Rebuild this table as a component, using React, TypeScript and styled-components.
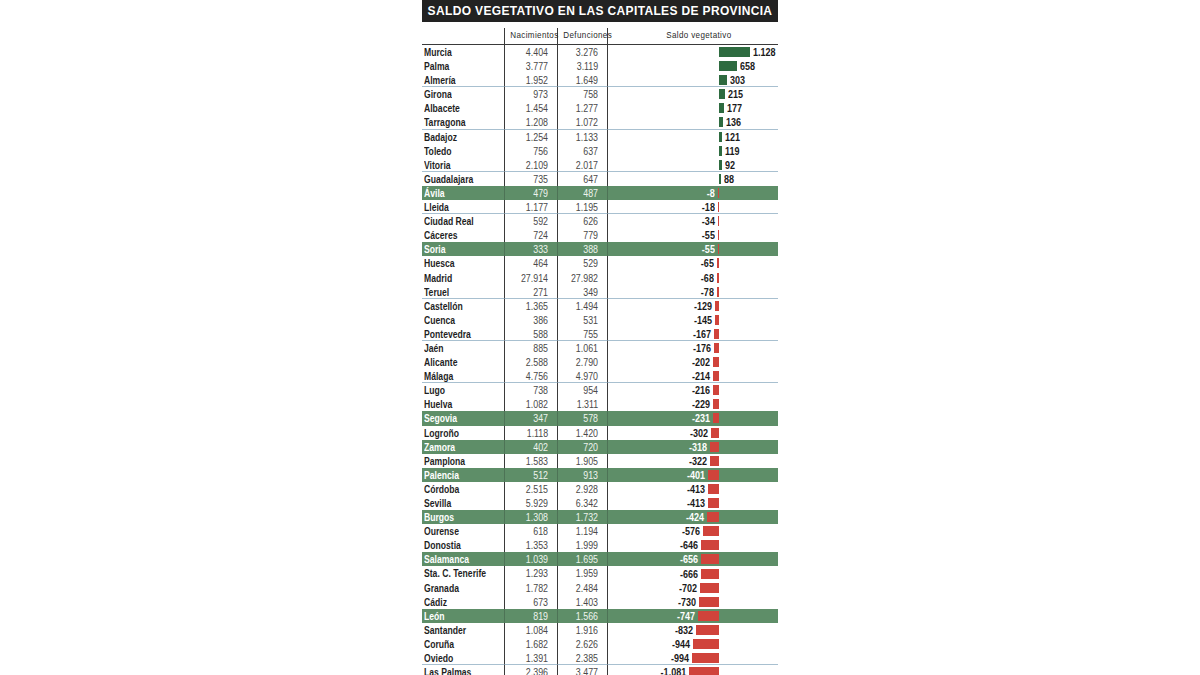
import React from 'react';
import styled, { createGlobalStyle } from 'styled-components';

const GlobalStyle = createGlobalStyle`
    html, body {
        margin: 0;
        padding: 0;
        background: #ffffff;
    }
    body {
        font-family: "Liberation Sans", Arial, sans-serif;
    }
`;

type Row = [string, string, string, number, boolean?];

// nombre, nacimientos, defunciones, saldo, destacada
const ROWS: Row[] = [
    ['Murcia', '4.404', '3.276', 1128],
    ['Palma', '3.777', '3.119', 658],
    ['Almería', '1.952', '1.649', 303],
    ['Girona', '973', '758', 215],
    ['Albacete', '1.454', '1.277', 177],
    ['Tarragona', '1.208', '1.072', 136],
    ['Badajoz', '1.254', '1.133', 121],
    ['Toledo', '756', '637', 119],
    ['Vitoria', '2.109', '2.017', 92],
    ['Guadalajara', '735', '647', 88],
    ['Ávila', '479', '487', -8, true],
    ['Lleida', '1.177', '1.195', -18],
    ['Ciudad Real', '592', '626', -34],
    ['Cáceres', '724', '779', -55],
    ['Soria', '333', '388', -55, true],
    ['Huesca', '464', '529', -65],
    ['Madrid', '27.914', '27.982', -68],
    ['Teruel', '271', '349', -78],
    ['Castellón', '1.365', '1.494', -129],
    ['Cuenca', '386', '531', -145],
    ['Pontevedra', '588', '755', -167],
    ['Jaén', '885', '1.061', -176],
    ['Alicante', '2.588', '2.790', -202],
    ['Málaga', '4.756', '4.970', -214],
    ['Lugo', '738', '954', -216],
    ['Huelva', '1.082', '1.311', -229],
    ['Segovia', '347', '578', -231, true],
    ['Logroño', '1.118', '1.420', -302],
    ['Zamora', '402', '720', -318, true],
    ['Pamplona', '1.583', '1.905', -322],
    ['Palencia', '512', '913', -401, true],
    ['Córdoba', '2.515', '2.928', -413],
    ['Sevilla', '5.929', '6.342', -413],
    ['Burgos', '1.308', '1.732', -424, true],
    ['Ourense', '618', '1.194', -576],
    ['Donostia', '1.353', '1.999', -646],
    ['Salamanca', '1.039', '1.695', -656, true],
    ['Sta. C. Tenerife', '1.293', '1.959', -666],
    ['Granada', '1.782', '2.484', -702],
    ['Cádiz', '673', '1.403', -730],
    ['León', '819', '1.566', -747, true],
    ['Santander', '1.084', '1.916', -832],
    ['Coruña', '1.682', '2.626', -944],
    ['Oviedo', '1.391', '2.385', -994],
    ['Las Palmas', '2.396', '3.477', -1081],
];

const SEPARATED = new Set([3, 6, 9, 12, 18, 21, 24, 44]);
const SCALE = 0.0275;

const fmt = (n: number) => {
    const abs = Math.abs(n).toString().replace(/\B(?=(\d{3})+(?!\d))/g, '.');
    return n < 0 ? `-${abs}` : abs;
};

const Page = styled.div`
    display: flex;
    justify-content: center;
    height: 675px;
    overflow: hidden;
`;

const Chart = styled.div`
    width: 356px;
    display: flex;
    flex-direction: column;
`;

const Title = styled.h1`
    margin: 0;
    height: 22px;
    background: #222222;
    color: #ffffff;
    font-weight: 700;
    font-size: 12px;
    letter-spacing: 0.35px;
    line-height: 23px;
    text-align: center;
    white-space: nowrap;
`;

const Grid = styled.div`
    margin-top: 6px;
    display: grid;
    grid-template-columns: 82px 53px 50px 171px;
`;

// condensed look: the page only has wide grotesques, so narrow them
const Narrow = styled.span<{ $origin?: 'left' | 'right' | 'center' }>`
    display: inline-block;
    transform: scaleX(0.82);
    transform-origin: ${({ $origin }) => $origin ?? 'left'} center;
`;

const HeadCell = styled.div<{ $rule?: boolean; $shift?: number }>`
    height: 17px;
    box-sizing: border-box;
    padding-left: ${({ $shift }) => $shift ?? 0}px;
    border-bottom: 1px solid #3a3a3a;
    ${({ $rule }) => $rule && 'border-left: 1px solid #3a3a3a;'}
    font-size: 9.8px;
    letter-spacing: 0.45px;
    color: #2a2a2a;
    line-height: 14px;
    text-align: center;
    white-space: nowrap;
`;

const Cell = styled.div<{ $hl?: boolean; $sep?: boolean; $rule?: boolean }>`
    box-sizing: border-box;
    height: 14.1px;
    line-height: 14px;
    font-size: 10px;
    white-space: nowrap;
    background: ${({ $hl }) => ($hl ? '#5e8e68' : 'transparent')};
    border-bottom: ${({ $sep }) => ($sep ? '1px solid #a8c0d0' : 'none')};
    ${({ $rule, $hl }) => $rule && `border-left: 1px solid ${$hl ? '#4d7356' : '#3a3a3a'};`}
`;

const Name = styled(Cell)`
    padding-left: 2px;
    font-weight: 700;
    font-size: 10.5px;
    color: ${({ $hl }) => ($hl ? '#ffffff' : '#1f1f1f')};
`;

const Num = styled(Cell)<{ $pad: number }>`
    text-align: right;
    padding-right: ${({ $pad }) => $pad}px;
    font-weight: 400;
    font-size: 10.8px;
    color: ${({ $hl }) => ($hl ? '#eef4ee' : '#4a4a4a')};
`;

const Saldo = styled(Cell)`
    display: grid;
    grid-template-columns: 111px 1fr;
    align-items: center;
`;

const Side = styled.div<{ $neg?: boolean }>`
    display: flex;
    align-items: center;
    justify-content: ${({ $neg }) => ($neg ? 'flex-end' : 'flex-start')};
    gap: 3px;
    height: 100%;
`;

const Bar = styled.span<{ $neg?: boolean }>`
    display: block;
    flex: none;
    height: 10px;
    background: ${({ $neg }) => ($neg ? '#d0433b' : '#2e6b40')};
`;

const Value = styled(Narrow)<{ $hl?: boolean }>`
    font-weight: 700;
    font-size: 11px;
    color: ${({ $hl }) => ($hl ? '#ffffff' : '#1a1a1a')};
`;

const App: React.FC = () => (
    <>
        <GlobalStyle />
        <Page>
            <Chart>
                <Title>SALDO VEGETATIVO EN LAS CAPITALES DE PROVINCIA</Title>
                <Grid>
                    <HeadCell />
                    <HeadCell $rule><Narrow $origin="center">Nacimientos</Narrow></HeadCell>
                    <HeadCell $rule><Narrow $origin="center">Defunciones</Narrow></HeadCell>
                    <HeadCell $rule $shift={12}><Narrow $origin="center">Saldo vegetativo</Narrow></HeadCell>
                    {ROWS.map(([name, nac, def, saldo, hl], i) => {
                        const sep = SEPARATED.has(i + 1);
                        const neg = saldo < 0;
                        const w = Math.max(1, Math.abs(saldo) * SCALE);
                        return (
                            <React.Fragment key={name}>
                                <Name $hl={hl} $sep={sep}><Narrow>{name}</Narrow></Name>
                                <Num $hl={hl} $sep={sep} $rule $pad={9}>
                                    <Narrow $origin="right">{nac}</Narrow>
                                </Num>
                                <Num $hl={hl} $sep={sep} $rule $pad={9}>
                                    <Narrow $origin="right">{def}</Narrow>
                                </Num>
                                <Saldo $hl={hl} $sep={sep} $rule>
                                    <Side $neg>
                                        {neg && <Value $hl={hl} $origin="right">{fmt(saldo)}</Value>}
                                        {neg && <Bar $neg style={{ width: w }} />}
                                    </Side>
                                    <Side>
                                        {!neg && <Bar style={{ width: w }} />}
                                        {!neg && <Value $hl={hl}>{fmt(saldo)}</Value>}
                                    </Side>
                                </Saldo>
                            </React.Fragment>
                        );
                    })}
                </Grid>
            </Chart>
        </Page>
    </>
);

export default App;
